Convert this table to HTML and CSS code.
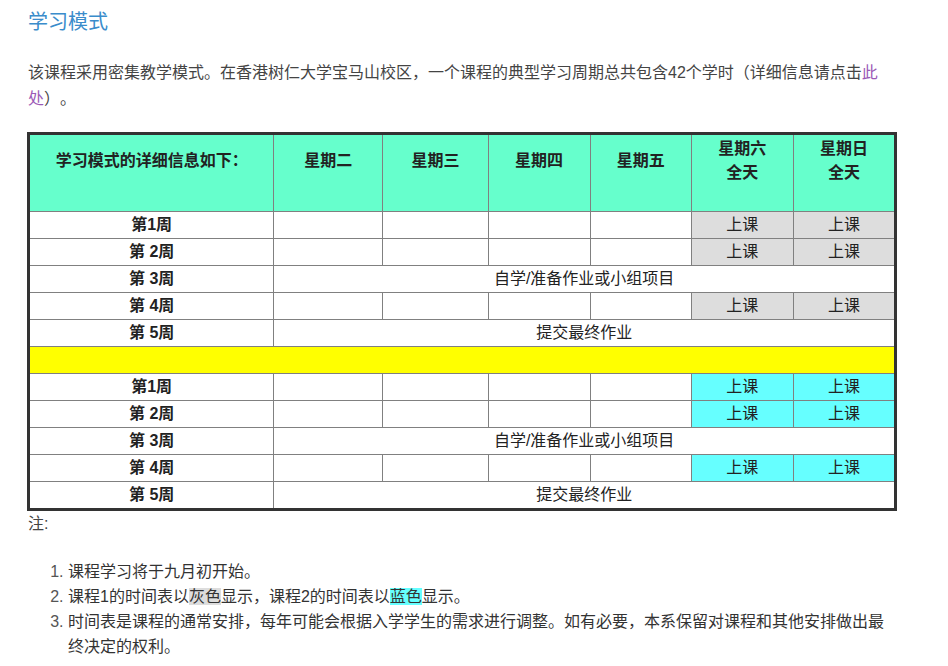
FILE: index.html
```html
<!DOCTYPE html>
<html lang="zh-CN">
<head>
<meta charset="utf-8">
<title>学习模式</title>
<link rel="stylesheet" href="styles.css">
</head>
<body>
<div class="page">
  <h2 class="title">学习模式</h2>
  <p class="intro">该课程采用密集教学模式。在香港树仁大学宝马山校区，一个课程的典型学习周期总共包含42个学时（详细信息请点击<a class="link" href="#">此处</a>）。</p>
  <table class="sched">
    <colgroup>
      <col class="c-week"><col class="c-tue"><col class="c-wed"><col class="c-thu"><col class="c-fri"><col class="c-sat"><col class="c-sun">
    </colgroup>
    <tr class="head">
      <th>学习模式的详细信息如下：</th>
      <th>星期二</th>
      <th>星期三</th>
      <th>星期四</th>
      <th>星期五</th>
      <th>星期六<br>全天</th>
      <th>星期日<br>全天</th>
    </tr>
    <tr><td class="wk">第1周</td><td></td><td></td><td></td><td></td><td class="gray">上课</td><td class="gray">上课</td></tr>
    <tr><td class="wk">第 2周</td><td></td><td></td><td></td><td></td><td class="gray">上课</td><td class="gray">上课</td></tr>
    <tr><td class="wk">第 3周</td><td colspan="6">自学/准备作业或小组项目</td></tr>
    <tr><td class="wk">第 4周</td><td></td><td></td><td></td><td></td><td class="gray">上课</td><td class="gray">上课</td></tr>
    <tr><td class="wk">第 5周</td><td colspan="6">提交最终作业</td></tr>
    <tr><td class="yellow" colspan="7"></td></tr>
    <tr><td class="wk">第1周</td><td></td><td></td><td></td><td></td><td class="cyan">上课</td><td class="cyan">上课</td></tr>
    <tr><td class="wk">第 2周</td><td></td><td></td><td></td><td></td><td class="cyan">上课</td><td class="cyan">上课</td></tr>
    <tr><td class="wk">第 3周</td><td colspan="6">自学/准备作业或小组项目</td></tr>
    <tr><td class="wk">第 4周</td><td></td><td></td><td></td><td></td><td class="cyan">上课</td><td class="cyan">上课</td></tr>
    <tr><td class="wk">第 5周</td><td colspan="6">提交最终作业</td></tr>
  </table>
  <p class="note">注:</p>
  <ol class="notes">
    <li>课程学习将于九月初开始。</li>
    <li>课程1的时间表以<span class="hl-gray">灰色</span>显示，课程2的时间表以<span class="hl-cyan">蓝色</span>显示。</li>
    <li>时间表是课程的通常安排，每年可能会根据入学学生的需求进行调整。如有必要，本系保留对课程和其他安排做出最终决定的权利。</li>
  </ol>
</div>
</body>
</html>
```

FILE: styles.css
```css
html, body {
  margin: 0;
  padding: 0;
  background: #ffffff;
}

body {
  font-family: "Liberation Sans", "Noto Sans CJK SC", sans-serif;
  font-size: 16px;
  color: #444444;
  text-spacing-trim: space-all;
}

.page {
  width: 870px;
  padding: 7px 0 0 27px;
}

.title {
  margin: 0;
  padding-left: 1px;
  font-size: 20px;
  font-weight: normal;
  line-height: 30px;
  color: #3a8ccb;
}

.intro {
  margin: 23px 0 20px 0;
  padding-left: 1px;
  line-height: 26px;
}

.link {
  color: #9b59b6;
  text-decoration: none;
}

.sched {
  width: 870px;
  border-collapse: collapse;
  border: 3px solid #333333;
  color: #222222;
  font-size: 16px;
}

.c-week { width: 245px; }
.c-tue { width: 109px; }
.c-wed { width: 105px; }
.c-thu { width: 102px; }
.c-fri { width: 101px; }
.c-sat { width: 102px; }
.c-sun { width: 102px; }

.sched th,
.sched td {
  border: 1px solid #808080;
  padding: 0;
  text-align: center;
}

.sched td {
  height: 26px;
  line-height: 26px;
  font-weight: normal;
}

.sched .head th {
  background: #66ffcc;
  height: 52px;
  padding-bottom: 24px;
  line-height: 24px;
  vertical-align: middle;
  font-weight: bold;
}

.sched td.wk {
  font-weight: bold;
}

.sched td.gray {
  background: #dddddd;
}

.sched td.cyan {
  background: #66ffff;
}

.sched td.yellow {
  background: #ffff00;
}

.note {
  margin: 0;
  padding-left: 1px;
  line-height: 26px;
}

.notes {
  margin: 22px 0 0 0;
  padding-left: 41px;
  line-height: 25px;
  color: #333333;
}

.notes li::marker {
  color: #555555;
}

.hl-gray {
  background: #dddddd;
}

.hl-cyan {
  background: #66ffff;
}
```
